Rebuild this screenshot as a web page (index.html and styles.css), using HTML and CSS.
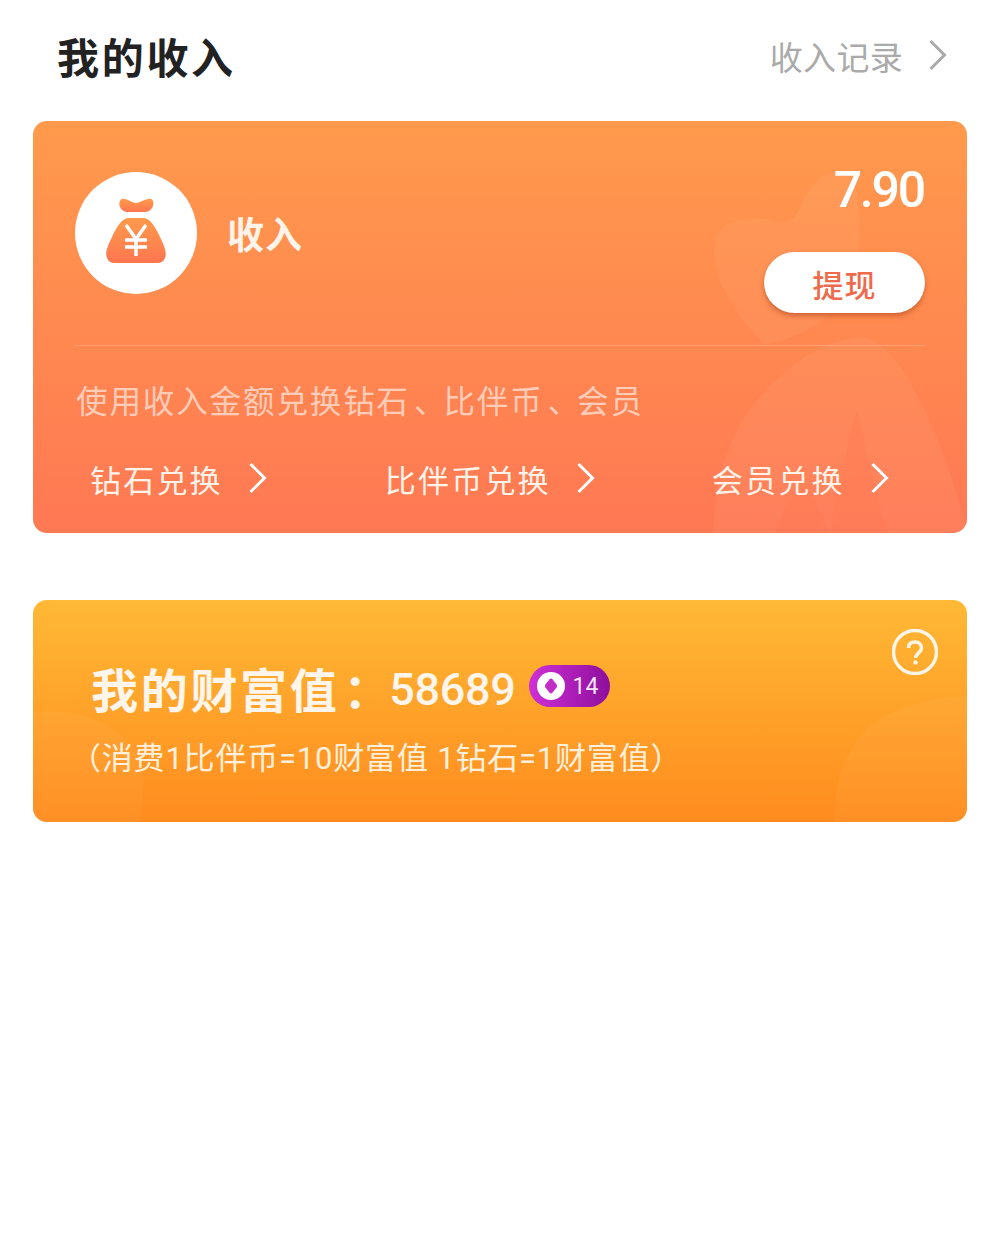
FILE: index.html
```html
<!DOCTYPE html>
<html lang="zh">
<head>
  <meta charset="utf-8">
  <title>我的收入</title>
  <link rel="stylesheet" href="styles.css">
</head>
<body>
  <div class="page">
    <div class="header">
      <h1 class="title">我的收入</h1>
      <div class="record">
        <span>收入记录</span>
        <svg class="chev chev-grey" viewBox="0 0 18 32"><path d="M2 2 L16 16 L2 30"/></svg>
      </div>
    </div>

    <div class="card income">
      <svg class="deco income-deco" viewBox="0 0 254 412">
        <path class="deco-a" d="M2 118 C8 98 40 94 62 100 C82 104 84 92 92 76 C100 60 112 50 128 50 C146 52 148 90 146 130 C144 170 120 208 52 224 C30 200 -6 160 2 118 Z"/>
        <path class="deco-a" d="M0 412 C2 350 20 300 60 262 C90 232 120 218 150 216 C180 222 205 270 225 320 C240 360 250 390 254 412 Z"/>
        <path class="deco-b" d="M118 412 C125 370 135 320 144 289 C150 320 165 380 175 412 Z"/>
        <path class="deco-b" d="M62 412 C70 385 85 365 95 370 C105 385 112 400 116 412 Z"/>
      </svg>
      <div class="income-top">
        <div class="income-left">
          <div class="bag-circle">
            <svg class="bag" viewBox="0 0 62 66">
              <defs>
                <linearGradient id="bagFill" x1="0" y1="0" x2="0" y2="1">
                  <stop offset="0" stop-color="#ff9a4c"/>
                  <stop offset="1" stop-color="#ff7650"/>
                </linearGradient>
              </defs>
              <path fill="url(#bagFill)" d="M17 1 C22 0 26 5 31 5 C36 5 41 0 46 1 C49 2 49 7 47 10 C45 13 42 14 40 14 L23 14 C20 14 16 12 15 9 C14 6 14 2 17 1 Z"/>
              <path fill="url(#bagFill)" d="M24 20 L38 20 C45 20 50 28 55 39 C60 49 62 55 60 60 C59 63 56 65 52 65 L10 65 C6 65 3 63 2 60 C0 55 2 49 7 39 C12 28 17 20 24 20 Z"/>
              <path class="yen" d="M21 27 L31 41 L41 27 M20 42 L42 42 M20 49 L42 49 M31 41 L31 58"/>
            </svg>
          </div>
          <div class="income-label">收入</div>
        </div>
        <div class="income-right">
          <div class="amount">7.90</div>
          <button class="withdraw">提现</button>
        </div>
      </div>
      <div class="divider"></div>
      <p class="hint">使用收入金额兑换钻石<span class="punct">、</span>比伴币<span class="punct">、</span>会员</p>
      <div class="links">
        <div class="link link-diamond"><span>钻石兑换</span><svg class="chev" viewBox="0 0 18 32"><path d="M2 2 L16 16 L2 30"/></svg></div>
        <div class="link link-coin"><span>比伴币兑换</span><svg class="chev" viewBox="0 0 18 32"><path d="M2 2 L16 16 L2 30"/></svg></div>
        <div class="link link-vip"><span>会员兑换</span><svg class="chev" viewBox="0 0 18 32"><path d="M2 2 L16 16 L2 30"/></svg></div>
      </div>
    </div>

    <div class="card wealth">
      <svg class="deco wealth-deco" viewBox="0 0 934 222">
        <path class="deco-c" d="M802 222 C800 170 820 130 860 112 C890 100 915 96 934 96 L934 222 Z"/>
        <path class="deco-c" d="M0 112 C40 108 90 120 108 165 C112 185 110 205 106 222 L0 222 Z"/>
      </svg>
      <svg class="help" viewBox="0 0 46 46">
        <circle cx="23" cy="23" r="21.5"/>
        <path d="M16.5 19 C16.5 15 19 13 23 13 C27 13 29.5 15.5 29.5 19 C29.5 22 27 23.5 25.5 25 C24 26.5 23.5 27.5 23.5 29"/>
        <circle class="help-dot" cx="23.5" cy="33.5" r="2.2"/>
      </svg>
      <div class="wealth-row">
        <span class="wealth-title">我的财富值<span class="punct">：</span></span>
        <span class="wealth-num">58689</span>
        <span class="badge">
          <svg class="badge-icon" viewBox="0 0 28 28">
            <circle cx="14" cy="14" r="14" fill="#fff"/>
            <path d="M12.6 7.2 C13.4 6.3 14.6 6.3 15.4 7.2 L19.6 12.6 C20.2 13.5 20.2 14.5 19.6 15.4 L15.4 20.8 C14.6 21.7 13.4 21.7 12.6 20.8 L8.4 15.4 C7.8 14.5 7.8 13.5 8.4 12.6 Z" fill="#c42cc8"/>
          </svg>
          <span>14</span>
        </span>
      </div>
      <p class="wealth-sub">（消费1比伴币=10财富值 1钻石=1财富值）</p>
    </div>
  </div>
</body>
</html>
```

FILE: styles.css
```css
* {
  box-sizing: border-box;
}

body {
  margin: 0;
  background-color: #fff;
  font-family: Roboto, "Noto Sans CJK SC", sans-serif;
}

.punct {
  padding-left: 4px;
  margin-right: -4px;
  font-family: "Noto Sans CJK TC", sans-serif;
}

.page {
  padding: 0 33px;
}

.header {
  height: 121px;
  padding: 0 20px 10px 24px;
  display: flex;
  justify-content: space-between;
  align-items: center;
}

.title {
  margin: 0;
  font-size: 42px;
  font-weight: 700;
  letter-spacing: 2.7px;
  color: #222;
}

.record {
  display: flex;
  align-items: center;
  gap: 25px;
  font-size: 33px;
  letter-spacing: 0.3px;
  color: #aaa;
}

.chev {
  width: 19px;
  height: 32px;
  fill: none;
  stroke: #fff;
  stroke-width: 3;
}

.chev-grey {
  stroke: #aaa;
  margin-bottom: 2px;
}

.card {
  position: relative;
  overflow: hidden;
  border-radius: 14px;
  color: #fff;
}

.deco {
  position: absolute;
  right: 0;
  bottom: 0;
}

.deco-a {
  fill: rgba(255, 255, 255, 0.05);
}

.deco-b {
  fill: rgba(255, 110, 70, 0.18);
}

.deco-c {
  fill: rgba(255, 255, 255, 0.04);
}

.income {
  height: 412px;
  padding: 0 42px;
  background: linear-gradient(#ff9a4c, #ff7854);
}

.income-deco {
  width: 254px;
  height: 412px;
}

.income-top {
  position: relative;
  height: 224px;
  display: flex;
  justify-content: space-between;
}

.income-left {
  display: flex;
  align-items: center;
  gap: 30px;
  height: 224px;
}

.bag-circle {
  width: 122px;
  height: 122px;
  border-radius: 50%;
  background-color: #fff;
  display: flex;
  justify-content: center;
  align-items: center;
}

.bag {
  width: 62px;
  height: 66px;
  margin-bottom: 4px;
}

.yen {
  fill: none;
  stroke: #fff;
  stroke-width: 3.5;
}

.income-label {
  font-size: 37px;
  font-weight: 700;
  color: #fff3ea;
  letter-spacing: 1px;
}

.income-right {
  display: flex;
  flex-direction: column;
  align-items: flex-end;
  padding-top: 38px;
}

.amount {
  margin-right: 1px;
  font-size: 50px;
  font-weight: 500;
  line-height: 62px;
  letter-spacing: -2.2px;
}

.withdraw {
  width: 161px;
  height: 61px;
  margin-top: 31px;
  padding-top: 2px;
  border: none;
  border-radius: 31px;
  background-color: #fff;
  box-shadow: 0 3px 5px rgba(170, 70, 30, 0.55);
  font-family: inherit;
  font-size: 31px;
  font-weight: 500;
  letter-spacing: 1px;
  color: #ee6a4c;
}

.divider {
  position: relative;
  height: 1px;
  background-color: rgba(255, 255, 255, 0.2);
}

.hint {
  position: relative;
  margin: 28px 0 0 1px;
  font-size: 31.5px;
  line-height: 50px;
  letter-spacing: 1.9px;
  color: rgba(255, 255, 255, 0.6);
}

.links {
  position: relative;
  margin-top: 25px;
  height: 50px;
  display: flex;
}

.link {
  display: flex;
  align-items: center;
  gap: 25px;
  font-size: 31px;
  letter-spacing: 2.2px;
  color: #fff3ea;
}

.link-diamond {
  margin-left: 15px;
}

.link-coin {
  margin-left: 118px;
}

.link-vip {
  margin-left: 117px;
}

.wealth {
  height: 222px;
  margin-top: 67px;
  background: linear-gradient(#ffb935, #ff8b1e);
}

.wealth-deco {
  left: 0;
  width: 934px;
  height: 222px;
}

.help {
  position: absolute;
  top: 29px;
  right: 29px;
  width: 46px;
  height: 46px;
  fill: none;
  stroke: #fff5e6;
  stroke-width: 3.5;
}

.help-dot {
  fill: #fff5e6;
  stroke: none;
}

.wealth-row {
  position: relative;
  padding: 56px 0 0 58px;
  height: 122px;
  display: flex;
  align-items: center;
}

.wealth-title {
  margin-top: -4px;
  font-size: 47px;
  font-weight: 700;
  letter-spacing: 2.7px;
  white-space: nowrap;
  color: #fff5ea;
}

.wealth-num {
  font-size: 45px;
  font-weight: 500;
  letter-spacing: -0.3px;
  margin-right: 13px;
  color: #fff5ea;
}

.badge {
  width: 81px;
  height: 42px;
  margin-top: -6px;
  padding-left: 8px;
  border-radius: 21px;
  background: linear-gradient(90deg, #cf2fd6, #8e0f9c);
  display: flex;
  align-items: center;
  gap: 8px;
  font-size: 23px;
  color: #f7e4f7;
}

.badge-icon {
  width: 28px;
  height: 28px;
}

.wealth-sub {
  position: relative;
  margin: 12px 0 0 37px;
  font-size: 31px;
  line-height: 50px;
  letter-spacing: 0.8px;
  color: #fff0de;
}
```
